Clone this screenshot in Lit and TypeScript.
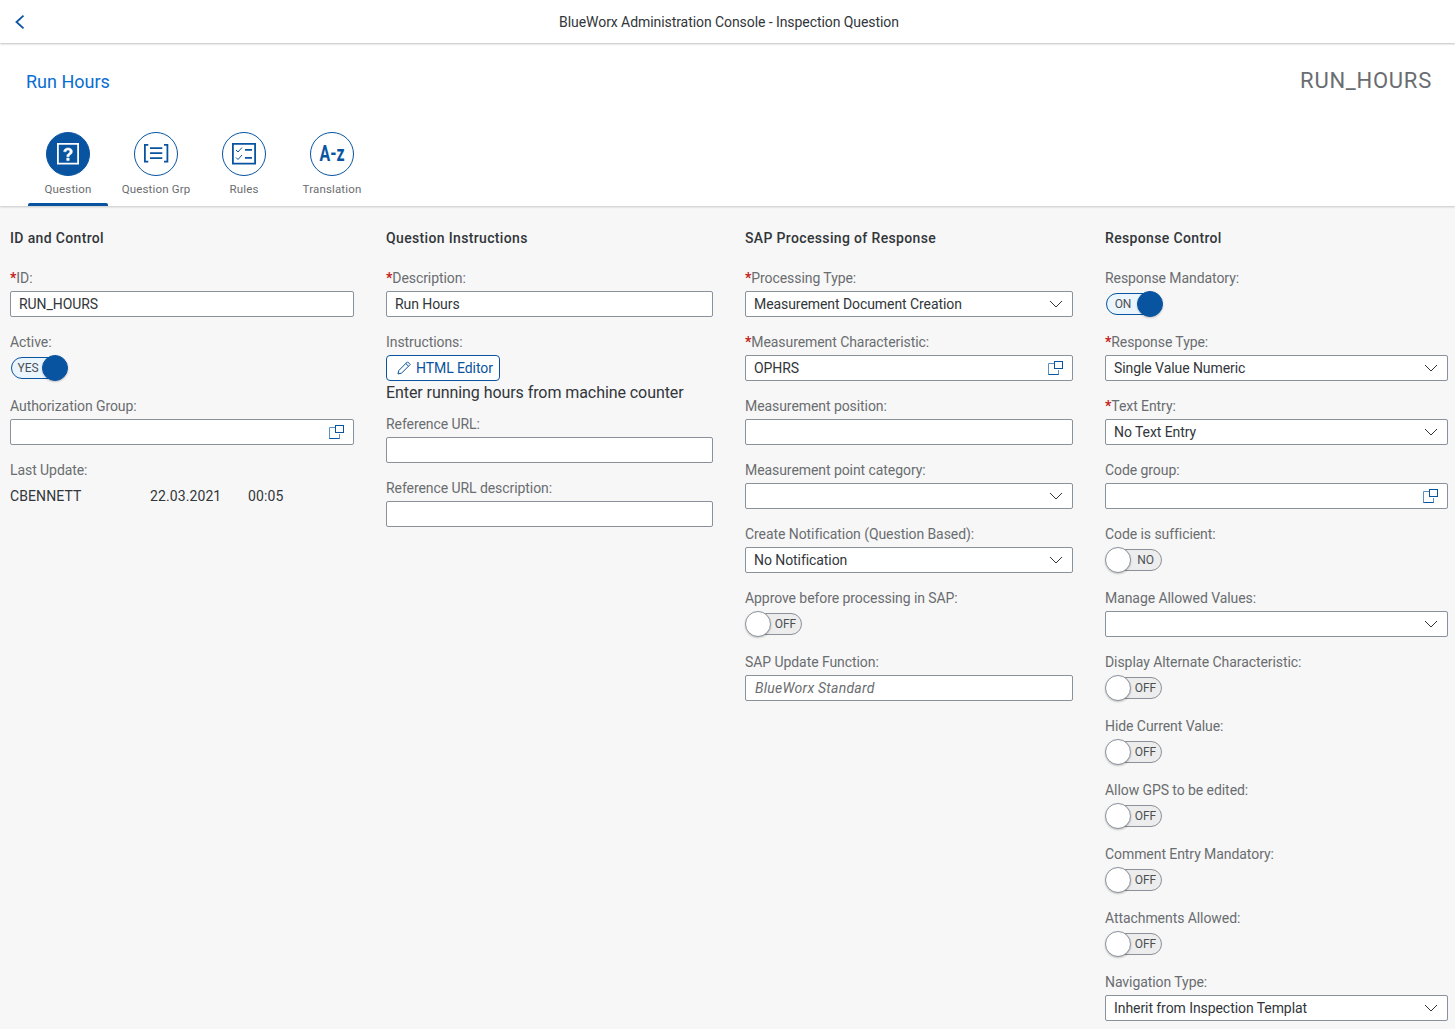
import { LitElement, html, css, svg } from "lit";
import { customElement } from "lit/decorators.js";

type Field =
  | { t: "input"; label: string; req?: boolean; value?: string; help?: boolean; ph?: boolean }
  | { t: "select"; label: string; req?: boolean; value?: string }
  | { t: "switch"; label: string; on: boolean; text: string }
  | { t: "update"; label: string }
  | { t: "editor"; label: string; text: string };

const columns: { title: string; fields: Field[] }[] = [
  {
    title: "ID and Control",
    fields: [
      { t: "input", label: "ID:", req: true, value: "RUN_HOURS" },
      { t: "switch", label: "Active:", on: true, text: "YES" },
      { t: "input", label: "Authorization Group:", help: true },
      { t: "update", label: "Last Update:" },
    ],
  },
  {
    title: "Question Instructions",
    fields: [
      { t: "input", label: "Description:", req: true, value: "Run Hours" },
      { t: "editor", label: "Instructions:", text: "Enter running hours from machine counter" },
      { t: "input", label: "Reference URL:" },
      { t: "input", label: "Reference URL description:" },
    ],
  },
  {
    title: "SAP Processing of Response",
    fields: [
      { t: "select", label: "Processing Type:", req: true, value: "Measurement Document Creation" },
      { t: "input", label: "Measurement Characteristic:", req: true, value: "OPHRS", help: true },
      { t: "input", label: "Measurement position:" },
      { t: "select", label: "Measurement point category:" },
      { t: "select", label: "Create Notification (Question Based):", value: "No Notification" },
      { t: "switch", label: "Approve before processing in SAP:", on: false, text: "OFF" },
      { t: "input", label: "SAP Update Function:", value: "BlueWorx Standard", ph: true },
    ],
  },
  {
    title: "Response Control",
    fields: [
      { t: "switch", label: "Response Mandatory:", on: true, text: "ON" },
      { t: "select", label: "Response Type:", req: true, value: "Single Value Numeric" },
      { t: "select", label: "Text Entry:", req: true, value: "No Text Entry" },
      { t: "input", label: "Code group:", help: true },
      { t: "switch", label: "Code is sufficient:", on: false, text: "NO" },
      { t: "select", label: "Manage Allowed Values:" },
      { t: "switch", label: "Display Alternate Characteristic:", on: false, text: "OFF" },
      { t: "switch", label: "Hide Current Value:", on: false, text: "OFF" },
      { t: "switch", label: "Allow GPS to be edited:", on: false, text: "OFF" },
      { t: "switch", label: "Comment Entry Mandatory:", on: false, text: "OFF" },
      { t: "switch", label: "Attachments Allowed:", on: false, text: "OFF" },
      { t: "select", label: "Navigation Type:", value: "Inherit from Inspection Templat" },
    ],
  },
];

const tabIcons = [
  svg`<path fill-rule="evenodd" d="M11 11h22v21.500H11zM12.800 12.800v17.900h18.400V12.800z"/><path stroke="#fff" stroke-width=".5" d="M17.600 19.600c.2-2.400 2-3.700 4.500-3.700 2.600 0 4.300 1.400 4.300 3.500 0 1.700-.9 2.500-2 3.300-.9.600-1.200 1-1.200 1.900v.1h-2.400v-.5c0-1.400.6-2.100 1.600-2.800.9-.6 1.400-1.100 1.400-1.900 0-.9-.7-1.500-1.700-1.500-1.100 0-1.900.7-2 1.800zM20.700 26.100h2.500v2.500h-2.500z"/>`,
  svg`<path d="M10 12h4.300v1.800h-2.500v15h2.500v1.800H10zM34.300 12H30v1.800h2.500v15H30v1.800h4.300zM16 15.300h12.300v1.800H16zM16 20.300h12.300v1.800H16zM16 25.300h12.300v1.800H16z"/>`,
  svg`<path fill-rule="evenodd" d="M10 11h24v21.500H10zM11.800 12.800v17.900h20.400V12.800z"/><path d="M23 17h7v1.800h-7zM23 25h7v1.800h-7z"/><path d="M14 18l2 2 4-4.500" fill="none" stroke="#0854a0" stroke-width="1"/><path d="M14 25.500l2 2 4-4.500" fill="none" stroke="#0854a0" stroke-width="1"/>`,
  svg`<text x="22" y="29" text-anchor="middle" font-family="Roboto, sans-serif" font-weight="700" font-size="22" textLength="25" lengthAdjust="spacingAndGlyphs" fill="#0854a0" letter-spacing="0">A-z</text>`,
];

const helpIcon = html`<svg class="ic" width="16" height="16" viewBox="0 0 16 16" fill="none">
  <path d="M6 3.500H.5V14.500H10.500V10" stroke="#5c8fc2" stroke-width="1"/>
  <path d="M.5 14.500H10.500" stroke="#0854a0" stroke-width="1"/>
  <rect x="6.500" y="1.500" width="8" height="7" stroke="#0854a0" stroke-width="1" fill="#fff"/>
</svg>`;

const chevron = html`<svg class="ic hi" width="14" height="8" viewBox="0 0 14 8" fill="none">
  <path d="M1 1l6 6 6-6" stroke="#32363a" stroke-width="1"/>
</svg>`;

@customElement("app-root")
export class AppRoot extends LitElement {
  static styles = css`
    :host {
      display: block;
      width: 1455px;
      height: 1029px;
      overflow: hidden;
      background: #f7f7f7;
      font-family: Roboto, "Noto Sans", sans-serif;
      font-size: 14px;
      letter-spacing: -0.07px;
      color: #32363a;
    }
    .shell {
      height: 43px;
      background: #fff;
      display: flex;
      align-items: center;
      justify-content: center;
      position: relative;
      z-index: 2;
      box-shadow: 0 1px 2px rgba(0, 0, 0, 0.25);
      box-sizing: border-box;
      padding-left: 3px;
    }
    .back {
      position: absolute;
      left: 15px;
      top: 15px;
    }
    .head {
      background: #fff;
      height: 163px;
      box-sizing: border-box;
      position: relative;
      z-index: 1;
      box-shadow: 0 1px 2px rgba(0, 0, 0, 0.2);
      display: flex;
      flex-direction: column;
    }
    .titles {
      display: flex;
      justify-content: space-between;
      align-items: center;
      padding: 25px 23px 0 26px;
      height: 26px;
    }
    .name {
      font-size: 18px;
      letter-spacing: 0;
      color: #0a6ed1;
    }
    .code {
      font-size: 22px;
      letter-spacing: 0.75px;
      color: #6a6d70;
      margin-top: -1px;
    }
    .tabs {
      display: flex;
      padding: 38px 0 0 24px;
    }
    .tab {
      width: 88px;
      height: 74px;
      display: flex;
      flex-direction: column;
      align-items: center;
      position: relative;
      font-size: 11.500px;
      letter-spacing: 0.15px;
      color: #6a6d70;
    }
    .circle {
      width: 44px;
      height: 44px;
      border-radius: 50%;
      border: 1px solid #0854a0;
      box-sizing: border-box;
      background: #fff;
      display: flex;
      align-items: center;
      justify-content: center;
      margin-bottom: 6px;
    }
    .circle svg {
      fill: #0854a0;
      flex: none;
    }
    .tab.sel .circle {
      background: #0854a0;
    }
    .tab.sel .circle svg {
      fill: #fff;
    }
    .tab.sel::after {
      content: "";
      position: absolute;
      left: 4px;
      right: 4px;
      bottom: 0;
      height: 3px;
      background: #0854a0;
      border-radius: 2px 2px 0 0;
    }
    .form {
      display: grid;
      grid-template-columns: 344px 327px 328px 343px;
      column-gap: 32px;
      padding: 22px 0 0 10px;
    }
    h2 {
      margin: 0 0 18px;
      font-size: 14px;
      line-height: 20px;
      font-weight: 500;
      letter-spacing: 0.35px;
    }
    .field {
      height: 64px;
    }
    .field.tall {
      height: 82px;
    }
    .label {
      height: 25px;
      line-height: 24px;
      color: #6a6d70;
      white-space: nowrap;
    }
    .req {
      color: #c61a1a;
      font-weight: 700;
    }
    .box {
      height: 26px;
      box-sizing: border-box;
      background: #fff;
      border: 1px solid #89919a;
      border-radius: 2px;
      padding: 0 8px;
      display: flex;
      align-items: center;
      justify-content: space-between;
      white-space: nowrap;
    }
    .ph {
      font-style: italic;
      color: #6a6d70;
      letter-spacing: 0.25px;
      padding-left: 1px;
    }
    .ic {
      flex: none;
    }
    .hi {
      margin-right: 1px;
    }
    .switch {
      width: 58px;
      height: 26px;
      position: relative;
    }
    .track {
      position: absolute;
      left: 1px;
      right: 1px;
      top: 2px;
      height: 22px;
      box-sizing: border-box;
      border: 1px solid #89919a;
      border-radius: 11px;
      background: #ededed;
      font-size: 12px;
      line-height: 20px;
      padding-left: 23px;
      text-align: center;
      color: #4c5054;
    }
    .knob {
      position: absolute;
      top: 0;
      left: 0;
      width: 26px;
      height: 26px;
      box-sizing: border-box;
      border-radius: 50%;
      background: #fff;
      border: 1px solid #89919a;
      box-shadow: 0 1px 2px rgba(0, 0, 0, 0.2);
    }
    .switch.on .track {
      border-color: #0854a0;
      background: #ebf5fe;
      padding-left: 0;
      padding-right: 20px;
      right: 3px;
    }
    .switch.on .knob {
      left: 32px;
      background: #0854a0;
      border-color: #0854a0;
    }
    .row {
      display: flex;
      height: 26px;
      align-items: center;
      letter-spacing: 0.1px;
    }
    .row span:nth-child(1) {
      width: 140px;
    }
    .row span:nth-child(2) {
      width: 98px;
    }
    .btn {
      width: 114px;
      height: 26px;
      box-sizing: border-box;
      border: 1px solid #0854a0;
      border-radius: 4px;
      background: #fff;
      color: #0854a0;
      display: flex;
      align-items: center;
      gap: 4px;
      padding-left: 9px;
    }
    .txt {
      height: 31px;
      line-height: 24px;
      font-size: 16px;
      letter-spacing: -0.07px;
    }
  `;

  private field(f: Field) {
    const label = html`<div class="label">${"req" in f && f.req ? html`<span class="req">*</span>` : ""}${f.label}</div>`;
    switch (f.t) {
      case "input":
        return html`<div class="field">${label}<div class="box"><span class=${f.ph ? "ph" : ""}>${f.value ?? ""}</span>${f.help ? helpIcon : ""}</div></div>`;
      case "select":
        return html`<div class="field">${label}<div class="box"><span>${f.value ?? ""}</span>${chevron}</div></div>`;
      case "switch":
        return html`<div class="field">${label}<div class="switch ${f.on ? "on" : ""}"><div class="track">${f.text}</div><div class="knob"></div></div></div>`;
      case "update":
        return html`<div class="field">${label}<div class="row"><span>CBENNETT</span><span>22.03.2021</span><span>00:05</span></div></div>`;
      case "editor":
        return html`<div class="field tall">${label}
          <div class="btn">
            <svg class="ic" width="16" height="16" viewBox="0 0 16 16" fill="none" stroke="#0854a0" stroke-width="1">
              <path d="M2 14l.8-3.500L11.500 1.800l2.700 2.700-8.700 8.700zM9.800 3.500l2.700 2.700"/>
            </svg>
            HTML Editor
          </div>
          <div class="txt">${f.text}</div>
        </div>`;
    }
  }

  render() {
    const tabs = ["Question", "Question Grp", "Rules", "Translation"];
    return html`
      <div class="shell">
        <svg class="back" width="10" height="14" viewBox="0 0 10 14" fill="none">
          <path d="M8.500 .700L1.500 7l7 6.300" stroke="#0854a0" stroke-width="1.800"/>
        </svg>
        BlueWorx Administration Console - Inspection Question
      </div>
      <div class="head">
        <div class="titles"><span class="name">Run Hours</span><span class="code">RUN_HOURS</span></div>
        <div class="tabs">
          ${tabs.map(
            (t, i) => html`<div class="tab ${i === 0 ? "sel" : ""}">
              <div class="circle"><svg width="44" height="44" viewBox="0 0 44 44">${tabIcons[i]}</svg></div>
              ${t}
            </div>`
          )}
        </div>
      </div>
      <div class="form">
        ${columns.map(
          (c) => html`<div><h2>${c.title}</h2>${c.fields.map((f) => this.field(f))}</div>`
        )}
      </div>
    `;
  }
}
